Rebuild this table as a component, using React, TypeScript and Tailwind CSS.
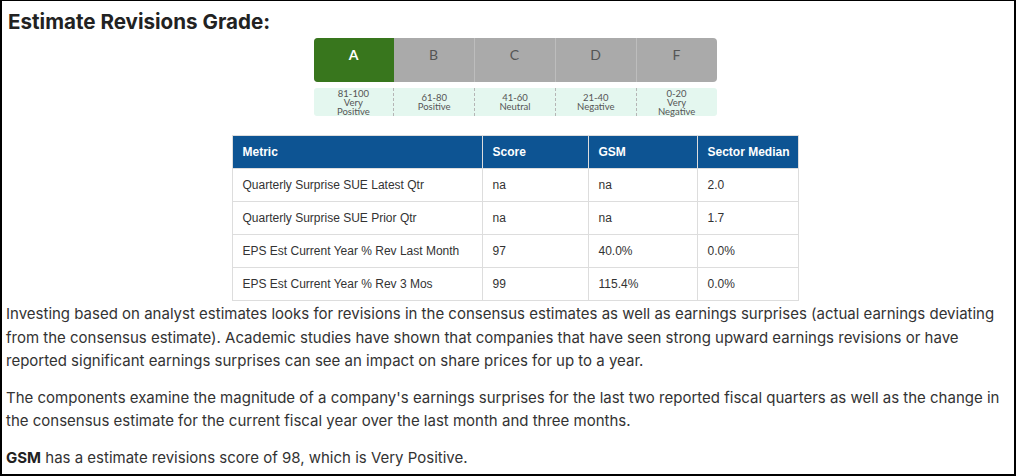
import React from 'react';

const grades = [
  { letter: 'A', label: ['81-100', 'Very', 'Positive'], active: true },
  { letter: 'B', label: ['61-80', 'Positive'], active: false },
  { letter: 'C', label: ['41-60', 'Neutral'], active: false },
  { letter: 'D', label: ['21-40', 'Negative'], active: false },
  { letter: 'F', label: ['0-20', 'Very', 'Negative'], active: false },
];

const rows: [string, string, string, string][] = [
  ['Quarterly Surprise SUE Latest Qtr', 'na', 'na', '2.0'],
  ['Quarterly Surprise SUE Prior Qtr', 'na', 'na', '1.7'],
  ['EPS Est Current Year % Rev Last Month', '97', '40.0%', '0.0%'],
  ['EPS Est Current Year % Rev 3 Mos', '99', '115.4%', '0.0%'],
];

const GradeBar: React.FC = () => (
  <div className="w-[403px] font-['Lato',sans-serif]">
    <div className="flex h-[44px] rounded-[4px] overflow-hidden bg-[#aaaaaa]">
      {grades.map((g, i) => (
        <div
          key={g.letter}
          className={
            g.active
              ? 'flex-1 flex justify-center pt-[6px] bg-[#38761d] text-white font-bold text-[14px]'
              : i > 1
              ? 'flex-1 flex justify-center pt-[6px] border-l border-[#bdbdbd] text-[#555] text-[14px]'
              : 'flex-1 flex justify-center pt-[6px] text-[#555] text-[14px]'
          }
        >
          {g.letter}
        </div>
      ))}
    </div>
    <div className="flex mt-[6px] h-[28px] rounded-[3px] bg-[#e4f7ef]">
      {grades.map((g, i) => (
        <div
          key={g.letter}
          className={
            i > 0
              ? 'flex-1 flex flex-col items-center justify-center border-l border-dashed border-[#b5b5b5] text-[#555] text-[9.5px] leading-[9px]'
              : 'flex-1 flex flex-col items-center justify-center text-[#555] text-[9.5px] leading-[9px]'
          }
        >
          {g.label.map((t) => (
            <span key={t}>{t}</span>
          ))}
        </div>
      ))}
    </div>
  </div>
);

const MetricsTable: React.FC = () => (
  <table className="w-[566px] table-fixed border-collapse font-['Liberation_Sans',Arial,sans-serif] text-[12px]">
    <thead>
      <tr className="bg-[#0d5493] text-white h-[33px]">
        <th className="w-[250px] text-left font-bold px-[10px] border border-[#dddddd]">Metric</th>
        <th className="w-[106px] text-left font-bold px-[10px] border border-[#dddddd]">Score</th>
        <th className="w-[109px] text-left font-bold px-[10px] border border-[#dddddd]">GSM</th>
        <th className="w-[101px] text-left font-bold pl-[10px] pr-0 border border-[#dddddd] whitespace-nowrap">Sector Median</th>
      </tr>
    </thead>
    <tbody className="text-[#333]">
      {rows.map((r) => (
        <tr key={r[0]} className="h-[33px]">
          {r.map((c, i) => (
            <td key={i} className="px-[10px] border border-[#dddddd] whitespace-nowrap">
              {c}
            </td>
          ))}
        </tr>
      ))}
    </tbody>
  </table>
);

export default function App() {
  return (
    <div className="w-[1016px] h-[476px] bg-white border-l-2 border-r-2 border-b-2 border-t border-black overflow-hidden font-['Inter',sans-serif] text-[#333]">
      <h2 className="pl-[6px] pt-[8px] text-[20.6px] leading-[26px] font-bold text-[#222]">
        Estimate Revisions Grade:
      </h2>
      <div className="flex flex-col items-center pl-[14px] mt-[3px]">
        <GradeBar />
        <div className="mt-[19px]">
          <MetricsTable />
        </div>
      </div>
      <div className="px-[4px] text-[15px] leading-[23.5px] text-[#333]">
        <p className="mt-[1px]">
          Investing based on analyst estimates looks for revisions in the consensus estimates as well as earnings
          surprises (actual earnings deviating from the consensus estimate). Academic studies have shown that companies
          that have seen strong upward earnings revisions or have reported significant earnings surprises can see an
          impact on share prices for up to a year.
        </p>
        <p className="mt-[13px]">
          The components examine the magnitude of a company's earnings surprises for the last two reported fiscal
          quarters as well as the change in the consensus estimate for the current fiscal year over the last month and
          three months.
        </p>
        <p className="mt-[13px]">
          <b className="font-bold text-[#222]">GSM</b> has a estimate revisions score of 98, which is Very Positive.
        </p>
      </div>
    </div>
  );
}
